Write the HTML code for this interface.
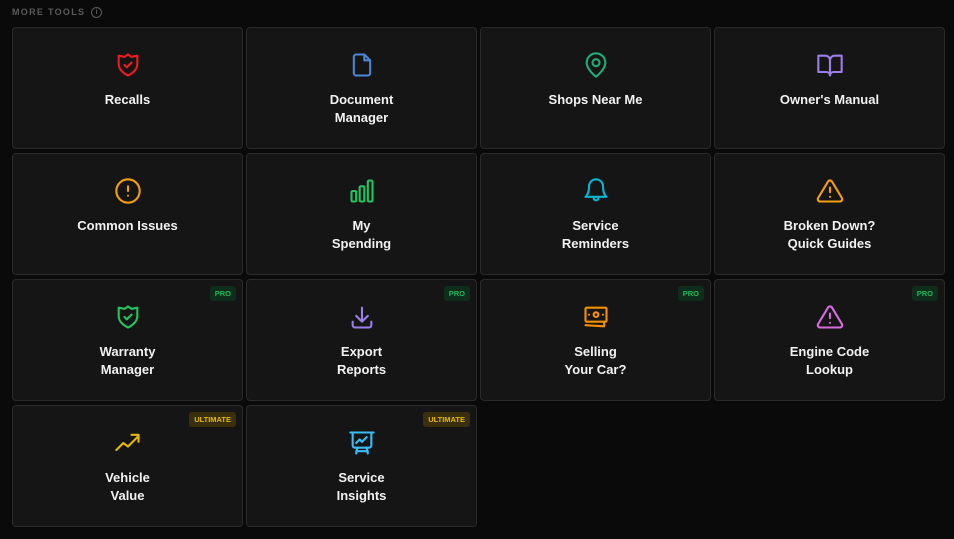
<!DOCTYPE html>
<html><head><meta charset="utf-8"><style>
*{margin:0;padding:0;box-sizing:border-box}
body{width:954px;height:539px;background:#0a0a0a;font-family:"Liberation Sans",sans-serif;position:relative;overflow:hidden}
.hd{position:absolute;left:12px;top:7px;color:#5a5a5a;font-size:9px;font-weight:bold;letter-spacing:1.3px}
.info{position:absolute;left:91px;top:7px;width:11px;height:11px;border:1px solid #5a5a5a;border-radius:50%;color:#5a5a5a;font-size:7px;text-align:center;line-height:9px;font-weight:bold}
.c{position:absolute;width:231px;height:122px;background:#151515;border:1px solid #2a2a2a;border-radius:4px}
.c svg{position:absolute;left:101px;top:23px;width:28px;height:28px;fill:none;stroke-width:1.8;stroke-linecap:round;stroke-linejoin:round}
.t{position:absolute;left:0;right:0;top:63px;text-align:center;color:#f2f2f2;font-size:13px;font-weight:bold;line-height:18px}
.b{position:absolute;top:6px;right:6px;height:15px;padding:0 5px;border-radius:3px;font-size:7.5px;font-weight:bold;line-height:15px}
.pro{background:#0f2d1b;color:#22b85a}
.ul{background:#3a2f0c;color:#e6b800}
</style></head><body>
<div class="hd">MORE TOOLS</div><div class="info">i</div>

<div class="c" style="left:12px;top:27px"><svg viewBox="0 0 24 24" stroke="#ef1c1c"><path d="M12 3l3 2 5-1v7c0 5-4 8-8 10-4-2-8-5-8-10V4l5 1z"/><path d="M9 12l2 2 4-4"/></svg><div class="t">Recalls</div></div>
<div class="c" style="left:246px;top:27px"><svg viewBox="0 0 24 24" stroke="#4a86d6"><path d="M14 3H7a2 2 0 0 0-2 2v14a2 2 0 0 0 2 2h10a2 2 0 0 0 2-2V8z"/><path d="M14 3v5h5"/></svg><div class="t">Document<br>Manager</div></div>
<div class="c" style="left:480px;top:27px"><svg viewBox="0 0 24 24" stroke="#1fae7a"><path d="M20 10c0 6-8 12-8 12S4 16 4 10a8 8 0 0 1 16 0z"/><circle cx="12" cy="10" r="3"/></svg><div class="t">Shops Near Me</div></div>
<div class="c" style="left:714px;top:27px"><svg viewBox="0 0 24 24" stroke="#9b7ee8"><path d="M2 4h6a4 4 0 0 1 4 4v13a3 3 0 0 0-3-3H2z"/><path d="M22 4h-6a4 4 0 0 0-4 4v13a3 3 0 0 1 3-3h7z"/></svg><div class="t">Owner's Manual</div></div>

<div class="c" style="left:12px;top:153px"><svg viewBox="0 0 24 24" stroke="#f59e0b"><circle cx="12" cy="12" r="10"/><path d="M12 8v4M12 16h.01"/></svg><div class="t">Common Issues</div></div>
<div class="c" style="left:246px;top:153px"><svg viewBox="0 0 24 24" stroke="#22c55e"><rect x="3" y="12" width="4" height="9" rx="1"/><rect x="10" y="8" width="4" height="13" rx="1"/><rect x="17" y="3" width="4" height="18" rx="1"/></svg><div class="t">My<br>Spending</div></div>
<div class="c" style="left:480px;top:153px"><svg viewBox="0 0 24 24" stroke="#06b6d4"><path d="M6 8a6 6 0 0 1 12 0c0 7 3 9 3 9H3s3-2 3-9"/><path d="M10 18a2 2 0 0 0 4 0"/></svg><div class="t">Service<br>Reminders</div></div>
<div class="c" style="left:714px;top:153px"><svg viewBox="0 0 24 24" stroke="#f59e0b"><path d="M10.3 3.9L1.8 18a2 2 0 0 0 1.7 3h17a2 2 0 0 0 1.7-3L13.7 3.9a2 2 0 0 0-3.4 0z"/><path d="M12 9v4M12 17h.01"/></svg><div class="t">Broken Down?<br>Quick Guides</div></div>

<div class="c" style="left:12px;top:279px"><div class="b pro">PRO</div><svg viewBox="0 0 24 24" stroke="#22c55e"><path d="M12 3l3 2 5-1v7c0 5-4 8-8 10-4-2-8-5-8-10V4l5 1z"/><path d="M9 12l2 2 4-4"/></svg><div class="t">Warranty<br>Manager</div></div>
<div class="c" style="left:246px;top:279px"><div class="b pro">PRO</div><svg viewBox="0 0 24 24" stroke="#9b7ee8"><path d="M4 16v3a2 2 0 0 0 2 2h12a2 2 0 0 0 2-2v-3"/><path d="M7 11l5 5 5-5M12 4v12"/></svg><div class="t">Export<br>Reports</div></div>
<div class="c" style="left:480px;top:279px"><div class="b pro">PRO</div><svg viewBox="0 0 24 24" stroke="#f59000"><rect x="3" y="4" width="18" height="12" rx="1"/><circle cx="12" cy="10" r="2"/><path d="M6 10h.01M18 10h.01M3 19l16 1v-3"/></svg><div class="t">Selling<br>Your Car?</div></div>
<div class="c" style="left:714px;top:279px"><div class="b pro">PRO</div><svg viewBox="0 0 24 24" stroke="#d86ae0"><path d="M10.3 3.9L1.8 18a2 2 0 0 0 1.7 3h17a2 2 0 0 0 1.7-3L13.7 3.9a2 2 0 0 0-3.4 0z"/><path d="M12 9v4M12 17h.01"/></svg><div class="t">Engine Code<br>Lookup</div></div>

<div class="c" style="left:12px;top:405px"><div class="b ul">ULTIMATE</div><svg viewBox="0 0 24 24" stroke="#e6b800"><path d="M2 18l6-6 4 3 9-9"/><path d="M15 5h6v6"/></svg><div class="t">Vehicle<br>Value</div></div>
<div class="c" style="left:246px;top:405px"><div class="b ul">ULTIMATE</div><svg viewBox="0 0 24 24" stroke="#38bdf8"><path d="M2 3h20M4 3v11a2 2 0 0 0 2 2h12a2 2 0 0 0 2-2V3"/><path d="M7 12l3-3 2 2 4-4M8 16l-1 5M16 16l1 5M7 19h10"/></svg><div class="t">Service<br>Insights</div></div>
</body></html>
